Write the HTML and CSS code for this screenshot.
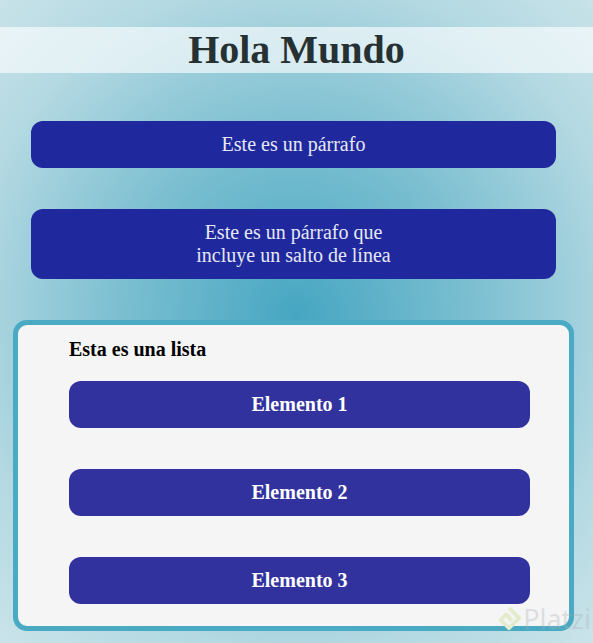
FILE: index.html
```html
<!DOCTYPE html>
<html lang="es">
<head>
<meta charset="utf-8">
<title>Hola Mundo</title>
<link rel="stylesheet" href="styles.css">
</head>
<body>
<h1 class="title">Hola Mundo</h1>
<main class="paras">
  <p class="para">Este es un párrafo</p>
  <p class="para">Este es un párrafo que<br>incluye un salto de línea</p>
</main>
<section class="box">
  <h2 class="box-title">Esta es una lista</h2>
  <ul class="items">
    <li class="item">Elemento 1</li>
    <li class="item">Elemento 2</li>
    <li class="item">Elemento 3</li>
  </ul>
</section>
<div class="watermark">
  <svg class="wm-logo" width="24" height="26" viewBox="0 0 26 28"><path d="M13 2 L24 13 L13 24 L4 15 L10 9 L15 14 L13 16" fill="none" stroke="#e3ebcc" stroke-width="4" stroke-linejoin="round"/></svg>
  <span class="wm-text">Platzi</span>
</div>
</body>
</html>
```
FILE: styles.css
```css
html, body {
  height: 100%;
}
body {
  margin: 0;
  padding-top: 27px;
  box-sizing: border-box;
  font-family: "Liberation Serif", "Times New Roman", serif;
  background: radial-gradient(ellipse 75% 70% at 50% 49%, #46a6c2 0%, #7cbfd1 40%, #b4d9e2 75%, #cbe4ea 100%);
  background-attachment: fixed;
  position: relative;
  overflow: hidden;
}
.title {
  margin: 0;
  height: 46px;
  line-height: 46px;
  font-size: 40px;
  font-weight: bold;
  text-align: center;
  color: #263133;
  background: rgba(255, 255, 255, 0.62);
}
.paras {
  display: flex;
  flex-direction: column;
  gap: 41px;
  margin: 48px 37px 0 31px;
}
.para {
  margin: 0;
  padding: 12px;
  line-height: 23px;
  font-size: 20px;
  text-align: center;
  color: #e6e8f5;
  background: #1f289d;
  border-radius: 12px;
}
.box {
  margin: 41px 19px 0 13px;
  border: 5px solid #4aaac3;
  border-radius: 14px;
  background: #f5f5f6;
  padding: 13px 39px 22px 51px;
}
.box-title {
  margin: 0 0 20px;
  font-size: 20px;
  line-height: 23px;
  font-weight: bold;
  color: #000;
}
.items {
  list-style: none;
  margin: 0;
  padding: 0;
  display: flex;
  flex-direction: column;
  gap: 41px;
}
.item {
  padding: 12px;
  line-height: 23px;
  font-size: 20px;
  font-weight: bold;
  text-align: center;
  color: #fff;
  background: #31329e;
  border-radius: 12px;
}
.watermark {
  position: absolute;
  right: 2px;
  bottom: 9px;
  display: flex;
  align-items: center;
  gap: 2px;
}
.wm-text {
  font-family: "Noto Sans", "Open Sans", sans-serif;
  font-size: 27px;
  color: rgba(170, 178, 180, 0.35);
  line-height: 30px;
}
```
